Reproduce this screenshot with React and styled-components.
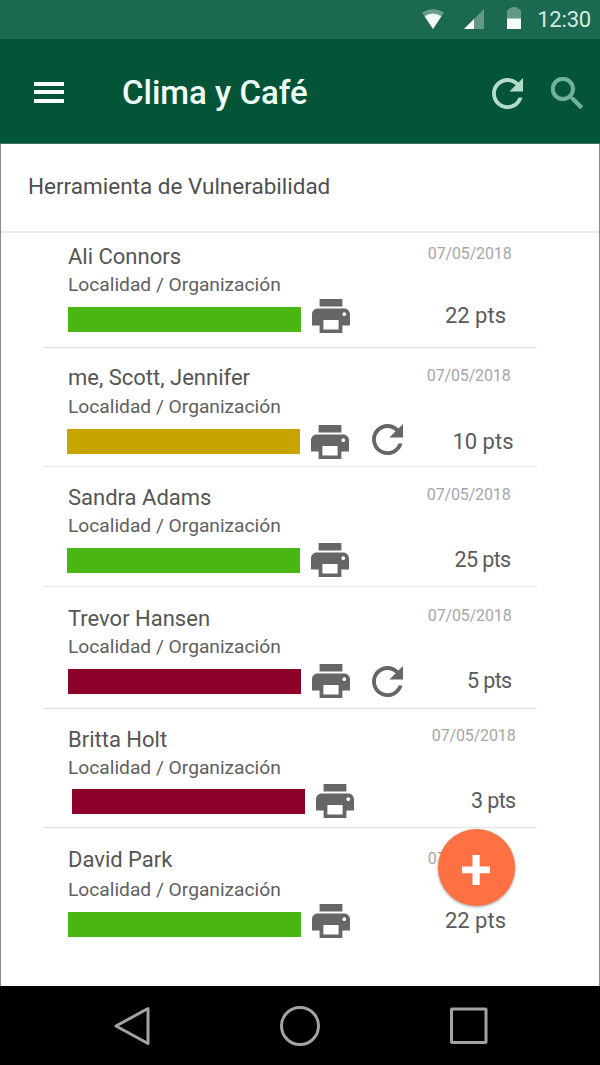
import styled, { createGlobalStyle } from "styled-components";

const GREEN = "#4ab613";
const YELLOW = "#c8a400";
const RED = "#8c002a";

const records = [
  {
    name: "Ali Connors",
    points: 22,
    color: GREEN,
    height: 115,
    nameTop: 11,
    placeTop: 3,
    barTop: 10,
    printTop: 66,
    dateTop: 11,
    ptsTop: 38,
    ptsRight: 31,
  },
  {
    name: "me, Scott, Jennifer",
    points: 10,
    color: YELLOW,
    height: 119,
    left: -0.6,
    nameTop: 17,
    placeTop: 4,
    barTop: 10,
    printTop: 76.7,
    reloadTop: 75.7,
    dateTop: 18,
    dateRight: 26.5,
    ptsTop: 42,
    ptsRight: 23.5,
  },
  {
    name: "Sandra Adams",
    points: 25,
    color: GREEN,
    height: 120,
    left: -0.6,
    nameTop: 18,
    placeTop: 3,
    barTop: 10.3,
    printTop: 75.7,
    dateTop: 18,
    dateRight: 26.5,
    ptsTop: 41,
    ptsRight: 26.4,
    tight: true,
  },
  {
    name: "Trevor Hansen",
    points: 5,
    color: RED,
    height: 122,
    left: 0.4,
    nameTop: 19,
    placeTop: 3,
    barTop: 10.4,
    printTop: 76.7,
    reloadTop: 79.3,
    dateTop: 19,
    ptsTop: 41,
    ptsRight: 25.4,
    tight: true,
  },
  {
    name: "Britta Holt",
    points: 3,
    color: RED,
    height: 119,
    left: 4.3,
    nameTop: 18,
    placeTop: 3,
    barTop: 9.3,
    printTop: 75,
    dateTop: 17,
    dateRight: 21.5,
    ptsTop: 41,
    ptsRight: 21.4,
    tight: true,
  },
  {
    name: "David Park",
    points: 22,
    color: GREEN,
    height: 140,
    nameTop: 19,
    placeTop: 5,
    barTop: 10,
    printTop: 76,
    dateTop: 21,
    ptsTop: 38,
    ptsRight: 31,
  },
];

const ReloadIcon = () => (
  <svg viewBox="4 4 16 16" fill="currentColor">
    <path d="M17.65 6.35C16.2 4.9 14.21 4 12 4c-4.42 0-7.99 3.58-7.99 8s3.57 8 7.99 8c3.73 0 6.84-2.55 7.73-6h-2.08c-.82 2.33-3.04 4-5.65 4-3.31 0-6-2.69-6-6s2.69-6 6-6c1.66 0 3.14.69 4.22 1.78L13 11h7V4l-2.35 2.35z" />
  </svg>
);

const PrintIcon = () => (
  <svg viewBox="2 3 20 18" fill="currentColor">
    <path d="M19 8H5c-1.66 0-3 1.34-3 3v6h4v4h12v-4h4v-6c0-1.66-1.34-3-3-3zm-3 11H8v-5h8v5zm3-7c-.55 0-1-.45-1-1s.45-1 1-1 1 .45 1 1-.45 1-1 1zm-1-9H6v4h12V3z" />
  </svg>
);

const StatusIcons = () => (
  <StatusIconBox>
    <svg width="22" height="20" viewBox="0 0 22 20">
      <path d="M0 3.6Q11-3.6 22 3.6L11 20z" fill="#fff" opacity=".35" />
      <path d="M2.6 7.2Q11 1.6 19.4 7.2L11 20z" fill="#f4faf7" />
    </svg>
    <svg width="20" height="20" viewBox="0 0 20 20">
      <path d="M20 0v20H0z" fill="#fff" opacity=".32" />
      <path d="M10 10v10H0z" fill="#f4faf7" />
    </svg>
    <svg width="14" height="22" viewBox="0 0 14 22">
      <path d="M0 22V5q0-3 3-3.6Q4 0 7 0t4 1.4Q14 2 14 5v17z" fill="#fff" opacity=".32" />
      <path d="M0 11.5h14V22H0z" fill="#f4faf7" />
    </svg>
  </StatusIconBox>
);

const Record = ({ data }) => (
  <Row $height={data.height}>
    <Person>
      <Name $top={data.nameTop}>{data.name}</Name>
      <Place $top={data.placeTop}>Localidad / Organización</Place>
      <Bar $top={data.barTop} $left={data.left} $color={data.color} />
    </Person>
    <PrintButton $top={data.printTop} $left={data.left}>
      <PrintIcon />
    </PrintButton>
    <ReloadButton $top={data.reloadTop} $left={data.left}>
      {data.reloadTop && <ReloadIcon />}
    </ReloadButton>
    <Score>
      <Date $top={data.dateTop} $right={data.dateRight}>
        07/05/2018
      </Date>
      <Points $top={data.ptsTop} $right={data.ptsRight} $tight={data.tight}>
        {data.points} pts
      </Points>
    </Score>
  </Row>
);

const App = () => {
  return (
    <Phone>
      <GlobalStyle />
      <StatusBar>
        <StatusIcons />
        <Clock>12:30</Clock>
      </StatusBar>
      <Header>
        <MenuButton>
          <span />
          <span />
          <span />
        </MenuButton>
        <Title>Clima y Café</Title>
        <HeaderReload>
          <ReloadIcon />
        </HeaderReload>
        <HeaderSearch>
          <svg viewBox="3 3 17.49 17.49" fill="currentColor" stroke="currentColor" strokeWidth=".3">
            <path d="M15.5 14h-.79l-.28-.27C15.41 12.59 16 11.11 16 9.5 16 5.91 13.09 3 9.5 3S3 5.91 3 9.5 5.91 16 9.5 16c1.61 0 3.09-.59 4.23-1.57l.27.28v.79l5 4.99L20.49 19l-4.99-5zm-6 0C7.01 14 5 11.99 5 9.5S7.01 5 9.5 5 14 7.01 14 9.5 11.99 14 9.5 14z" />
          </svg>
        </HeaderSearch>
      </Header>
      <Content>
        <Subtitle>Herramienta de Vulnerabilidad</Subtitle>
        {records.map((item) => (
          <Record key={item.name} data={item} />
        ))}
        <AddButton>
          <svg width="28" height="30" viewBox="0 0 28 30" fill="#fff">
            <path d="M10.5 0h7.2v11.5H28v6.7H17.7V30h-7.2V18.2H0v-6.7h10.5z" />
          </svg>
        </AddButton>
      </Content>
      <NavBar>
        <svg width="36" height="40" viewBox="0 0 36 40">
          <path d="M34 2.5v35L2 20z" />
        </svg>
        <svg width="40" height="40" viewBox="0 0 40 40">
          <circle cx="20" cy="20" r="18.5" />
        </svg>
        <svg width="38" height="38" viewBox="0 0 38 38">
          <rect x="1.5" y="2" width="34.5" height="33.5" rx=".5" />
        </svg>
      </NavBar>
    </Phone>
  );
};

const GlobalStyle = createGlobalStyle`
  * {
    box-sizing: border-box;
  }
  body {
    margin: 0;
    font-family: Roboto, "Liberation Sans", sans-serif;
  }
  svg {
    display: block;
  }
`;

const Phone = styled.div`
  display: flex;
  flex-direction: column;
  width: 600px;
  height: 1065px;
  overflow: hidden;
  background: #fff;
`;

const StatusBar = styled.div`
  display: flex;
  justify-content: flex-end;
  height: 39px;
  padding-right: 9px;
  background: #1a6950;
`;
const StatusIconBox = styled.div`
  display: flex;
  align-items: flex-end;
  height: 29px;
  svg:nth-child(2) {
    margin: 0 23px 0 20px;
  }
`;
const Clock = styled.div`
  margin: 6px 0 0 16px;
  font-size: 22px;
  line-height: 28px;
  letter-spacing: -0.2px;
  color: #d3ebe0;
`;

const Header = styled.header`
  display: flex;
  height: 105px;
  padding: 0 17px 0 34px;
  background: #045438;
  border-bottom: 1px solid #3d7561;
`;
const MenuButton = styled.div`
  width: 30px;
  margin-top: 43px;
  span {
    display: block;
    height: 4px;
    margin-bottom: 4.4px;
    background: #f6fffb;
  }
`;
const Title = styled.h1`
  flex: 1;
  margin: 34px 0 0 58px;
  font-size: 33px;
  font-weight: 500;
  line-height: 40px;
  color: #f0fffa;
`;
const HeaderReload = styled.div`
  width: 31px;
  margin: 39px 28px 0 0;
  color: #b5dccb;
`;
const HeaderSearch = styled.div`
  width: 32px;
  margin-top: 38px;
  color: #74b39a;
`;

const Content = styled.main`
  position: relative;
  flex: 1;
  border: 1px solid #8a8a8a;
  border-width: 0 1px;
`;
const Subtitle = styled.h2`
  height: 89px;
  margin: 0;
  padding: 28px 0 0 27px;
  border-bottom: 2px solid #ebebeb;
  font-size: 22.5px;
  font-weight: 400;
  line-height: 28px;
  color: #505050;
`;

const Row = styled.div`
  display: flex;
  align-items: flex-start;
  width: 494px;
  height: ${(props) => props.$height}px;
  margin-left: 42px;
  padding-left: 25px;
  border-bottom: 1px solid #e2e2e2;
  &:nth-of-type(6) {
    border-bottom: 0;
  }
`;
const Person = styled.div`
  width: 233px;
`;
const Name = styled.div`
  margin-top: ${(props) => props.$top}px;
  font-size: 22px;
  line-height: 26px;
  color: #555;
`;
const Place = styled.div`
  margin-top: ${(props) => props.$top}px;
  font-size: 19.2px;
  line-height: 24px;
  white-space: nowrap;
  color: #606060;
`;
const Bar = styled.div`
  width: 233px;
  height: 24.5px;
  margin-top: ${(props) => props.$top}px;
  margin-left: ${(props) => props.$left || 0}px;
  background: ${(props) => props.$color};
`;
const PrintButton = styled.div`
  width: 38px;
  margin-top: ${(props) => props.$top}px;
  margin-left: ${(props) => 11 + (props.$left || 0)}px;
  color: #666;
`;
const ReloadButton = styled.div`
  width: 31px;
  margin-top: ${(props) => props.$top || 0}px;
  margin-left: ${(props) => 22 - (props.$left || 0)}px;
  color: #666;
`;
const Score = styled.div`
  flex: 1;
  text-align: right;
`;
const Date = styled.div`
  margin-top: ${(props) => props.$top}px;
  margin-right: ${(props) => props.$right || 25.5}px;
  font-size: 16px;
  line-height: 20px;
  letter-spacing: -0.15px;
  color: #a6a6a6;
`;
const Points = styled.div`
  margin-top: ${(props) => props.$top}px;
  margin-right: ${(props) => props.$right}px;
  font-size: ${(props) => (props.$tight ? "21.5px" : "22px")};
  line-height: 28px;
  letter-spacing: ${(props) => (props.$tight ? "-0.6px" : "0")};
  color: #5a5a5a;
`;

// floats over the last record
const AddButton = styled.button`
  position: absolute;
  top: 684.5px;
  left: 436.5px;
  display: flex;
  align-items: center;
  justify-content: center;
  width: 77px;
  height: 77px;
  padding: 5px 1px 0 0;
  border: 0;
  border-radius: 50%;
  background: #ff7042;
  box-shadow: 0 1px 3px rgba(0, 0, 0, 0.4);
`;

const NavBar = styled.nav`
  display: flex;
  align-items: center;
  justify-content: space-between;
  height: 79px;
  padding: 0 112px 0 114px;
  background: #000;
  svg {
    fill: none;
    stroke: #a3a3a3;
    stroke-width: 3;
    stroke-linejoin: round;
  }
`;

export default App;
